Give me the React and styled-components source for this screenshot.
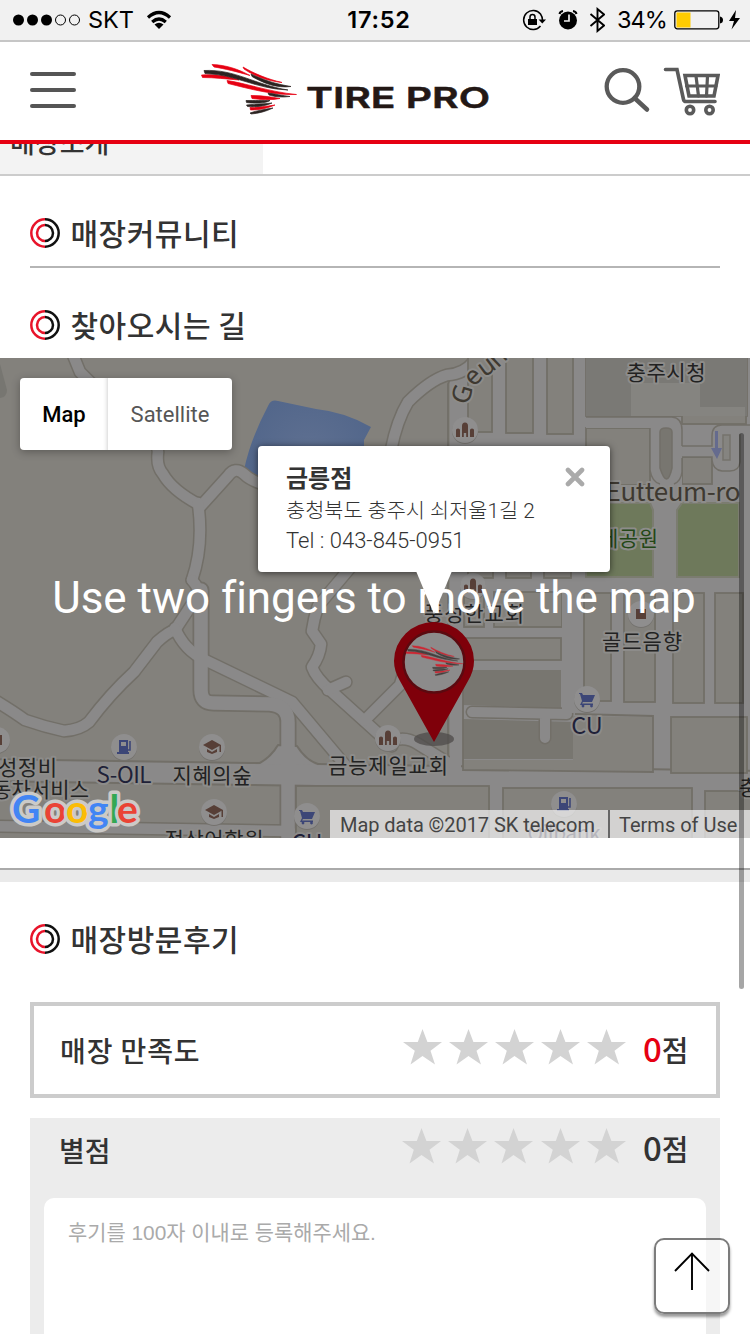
import React from "react";
import styled, { createGlobalStyle } from "styled-components";

const KR = `"Noto Sans CJK KR", sans-serif`;

const GlobalStyle = createGlobalStyle`
  html, body { margin: 0; background: #fff; }
  body { width: 750px; height: 1334px; overflow: hidden; }
  * { box-sizing: border-box; }
`;

const Screen = styled.div`
  position: relative;
  width: 750px;
  height: 1334px;
  overflow: hidden;
  display: flex;
  flex-direction: column;
  background: #fff;
  color: #333;
  font-family: ${KR};
`;

/* ---------- status bar ---------- */
const StatusBar = styled.div`
  display: grid;
  grid-template-columns: 1fr auto 1fr;
  align-items: center;
  height: 42px;
  flex: none;
  padding: 0 10px 1px 13px;
  background: #f1f1f1;
  border-bottom: 2px solid #c6c6c6;
  color: #000;
  font: 400 24px/40px Inter, sans-serif;
`;
const Cluster = styled.div`
  display: flex;
  align-items: center;
  justify-content: ${(p) => (p.$end ? "flex-end" : "flex-start")};
`;
const Carrier = styled.span`
  margin: 0 12px 0 8px;
  font-size: 23.5px;
`;
const Clock = styled.span`
  font-weight: 600;
  font-size: 23.5px;
  letter-spacing: 0.8px;
  padding-left: 5px;
`;
const Percent = styled.span`
  font-size: 23.5px;
  letter-spacing: -0.9px;
  margin: 0 7px 0 12px;
`;

/* ---------- header ---------- */
const Header = styled.header`
  display: flex;
  align-items: center;
  height: 102px;
  flex: none;
  padding: 0 30px 2px 30px;
  border-bottom: 4px solid #e60012;
  background: #fff;
`;
const Menu = styled.div`
  display: flex;
  flex-direction: column;
  gap: 11.5px;
  width: 46px;
`;
const MenuLine = styled.span`
  height: 4.4px;
  border-radius: 2px;
  background: #555;
`;
const Logo = styled.svg`
  margin: 0 0 8px 119px;
  display: block;
`;
const HeaderTools = styled.div`
  display: flex;
  margin: 2px 0 0 auto;
`;

/* ---------- tabs ---------- */
const TabStrip = styled.div`
  height: 32px;
  flex: none;
  display: flex;
  border-bottom: 2px solid #ccc;
`;
const Tab = styled.div`
  width: 263px;
  overflow: hidden;
  padding-left: 10px;
  background: #f3f3f3;
  font-weight: 500;
  font-size: 27px;
  line-height: 30px;
`;
const TabText = styled.span`
  display: block;
  margin-top: -17px;
`;

/* ---------- section titles ---------- */
const SectionTitle = styled.h2`
  display: flex;
  align-items: center;
  gap: 10.5px;
  margin: ${(p) => p.$margin};
  height: 30px;
  flex: none;
  font-weight: 500;
  font-size: 30px;
  line-height: 28px;
  letter-spacing: 0.5px;
  color: #333;
`;
const TitleText = styled.span`
  margin-top: -2px;
`;
const Rule = styled.div`
  height: 2px;
  flex: none;
  margin: 18px 30px 0;
  background: #b5b5b5;
`;

/* ---------- map ---------- */
const MapBox = styled.section`
  position: relative;
  height: 480px;
  flex: none;
  overflow: hidden;
  background: #83817c;
  font-family: Roboto, ${KR};
`;
const MapCanvas = styled.svg`
  display: block;
`;
const MapTypes = styled.div`
  position: absolute;
  left: 20px;
  top: 20px;
  display: flex;
  height: 72px;
  border-radius: 4px;
  background: #fff;
  box-shadow: 0 2px 8px rgba(0, 0, 0, 0.3);
`;
const MapType = styled.div`
  width: ${(p) => (p.$on ? 88 : 124)}px;
  text-align: center;
  font-size: 22px;
  line-height: 73px;
  font-weight: ${(p) => (p.$on ? 500 : 400)};
  color: ${(p) => (p.$on ? "#000" : "#565656")};
  box-shadow: ${(p) => (p.$on ? "inset -5px 0 5px -5px rgba(0,0,0,.25)" : "none")};
`;
const InfoWindow = styled.div`
  position: absolute;
  left: 258px;
  top: 88px;
  width: 352px;
  height: 126px;
  padding: 15px 28px;
  border-radius: 4px;
  background: #fff;
  box-shadow: 0 1px 7px rgba(0, 0, 0, 0.6);
  color: #333;
  font-size: 22px;
  line-height: 30px;
  font-weight: 300;
`;
const ShopName = styled.div`
  font-family: ${KR};
  font-weight: 700;
  font-size: 24px;
  line-height: 32px;
  margin-bottom: 3px;
`;
const Address = styled.div`
  font-size: 20.8px;
  white-space: nowrap;
`;
const Close = styled.svg`
  position: absolute;
  right: 25px;
  top: 21px;
`;
const Tail = styled.svg`
  position: absolute;
  left: 154px;
  top: 125px;
`;
const Gesture = styled.div`
  position: absolute;
  left: 0;
  right: 2px;
  top: 214px;
  text-align: center;
  color: #fff;
  font-size: 44px;
  line-height: 52px;
  letter-spacing: -0.03px;
  white-space: nowrap;
`;
const Attribution = styled.div`
  position: absolute;
  right: 0;
  bottom: 0;
  display: flex;
  height: 28px;
  font-size: 20px;
  line-height: 31px;
  color: #444;
`;
const Credit = styled.span`
  width: ${(p) => (p.$last ? 142 : 278)}px;
  padding-left: ${(p) => (p.$last ? 9 : 10)}px;
  background: rgba(245, 245, 245, 0.7);
  border-left: ${(p) => (p.$last ? "2px solid #666" : "none")};
  white-space: nowrap;
  letter-spacing: ${(p) => (p.$last ? 0 : -0.05)}px;
`;

/* ---------- reviews ---------- */
const Divider = styled.div`
  height: 14px;
  flex: none;
  margin-top: 30px;
  border-top: 2px solid #aaa;
  background: #eaeaea;
`;
const ScoreCard = styled.div`
  display: flex;
  align-items: center;
  height: 96px;
  flex: none;
  margin: 48px 30px 0;
  padding: 0 27px 3px 26px;
  border: 4px solid #ccc;
`;
const Label = styled.span`
  font-weight: 500;
  font-size: 28px;
  line-height: 40px;
  letter-spacing: ${(p) => p.$track || 0}px;
  padding-top: ${(p) => p.$drop || 0}px;
`;
const Stars = styled.div`
  display: flex;
  gap: ${(p) => p.$gap}px;
  margin: 0 0 ${(p) => p.$lift}px auto;
`;
const Score = styled.span`
  width: 46px;
  margin-left: 17px;
  font-weight: 500;
  font-size: 29px;
  line-height: 40px;
  white-space: nowrap;
`;
const Digit = styled.span`
  font-size: 33px;
  color: ${(p) => (p.$red ? "#e60012" : "#333")};
`;
const ReviewForm = styled.div`
  display: flex;
  flex-direction: column;
  flex: 1;
  margin: 20px 30px 0;
  padding: 0 14px;
  background: #ececec;
`;
const FormTop = styled.div`
  display: flex;
  align-items: center;
  height: 80px;
  flex: none;
  padding: 0 17px 22px 15px;
`;
const TextArea = styled.div`
  flex: 1;
  padding: 21px 24px;
  border-radius: 10px 10px 0 0;
  background: #fff;
  color: #aaa;
  font: 400 20.9px/28px "Liberation Sans", ${KR};
`;

/* ---------- floating ---------- */
const TopButton = styled.button`
  position: absolute;
  left: 654px;
  top: 1238px;
  width: 76px;
  height: 76px;
  padding: 0;
  display: flex;
  justify-content: center;
  border: 2px solid #7c7c7c;
  border-radius: 10px;
  background: rgba(255, 255, 255, 0.5);
  box-shadow: 0 3px 3px rgba(0, 0, 0, 0.4);
`;
const ScrollThumb = styled.div`
  position: absolute;
  left: 739px;
  top: 433px;
  width: 5px;
  height: 556px;
  border-radius: 3px;
  background: rgba(0, 0, 0, 0.35);
`;

/* each feather is a tapered sliver */
const Wing = () => (
  <g strokeWidth=".7" strokeLinejoin="round">
    <g fill="#e60012" stroke="#e60012">
      <path d="M12 9.500C26 10 38 14 50 20.500C38 17 24 13.500 14 12Z" />
      <path d="M43 12C54 18.500 67 24 82 27.500C67 26 54 21 44 14Z" />
      <path d="M1.500 20C14 19 28 20.500 39 25C27 24 14 22.500 2.500 22.500Z" />
      <path d="M27 25.500C45 28 70 37 96.500 39.500C74 40.500 50 34 28 28.500Z" />
      <path d="M51 40.500C62 40.500 71 42 80 43.500C71 45.500 60 44.500 52 43.500Z" />
      <path d="M50 52.500C59 52 66 51.500 75 50C67 53.500 59 55 50.500 55Z" />
    </g>
    <g fill="#2b2321" stroke="#2b2321">
      <path d="M4 15.500C35 14 54 29.500 88 35C56 34 36 19.500 5 18.500Z" />
      <path d="M51 19C64 25.500 78 29.500 91 31.500C77 33.500 63 28 52 21.500Z" />
      <path d="M68 38C75 39 82 40.500 90 41.500C82 42.500 75 42 69 40Z" />
      <path d="M46 45.500C54 45.500 64 45.500 70 45.500C66 48.500 53 48.500 46.500 47.500Z" />
      <path d="M46.500 50C56 49 64 49 72 48C64 51.500 56 52 47.500 51.500Z" />
      <path d="M50 58C57 55.500 64 54.500 73 53C66 56.500 58 58.500 51 59Z" />
    </g>
  </g>
);

const Ring = () => (
  <svg width="30" height="30" viewBox="0 0 30 30" fill="none" strokeWidth="2.500">
    <path d="M15 1.300A13.700 13.700 0 0 0 15 28.700" stroke="#e8142a" />
    <path d="M15 1.300A13.700 13.700 0 0 1 15 28.700" stroke="#111" />
    <path d="M15 7A8 8 0 0 0 15 23" stroke="#e8142a" />
    <path d="M15 7A8 8 0 0 1 15 23" stroke="#111" />
  </svg>
);

const Star = () => (
  <svg width="39" height="36" viewBox="0 0 39 36">
    <path d="M19.500 0L24.400 13H39L27.500 21.700L32 35.500L19.500 27L7.500 35.500L11.800 21.700L0 13H14.800Z" fill="#d3d3d3" />
  </svg>
);

const StarRow = ({ gap, lift }) => (
  <Stars $gap={gap} $lift={lift}>
    {[0, 1, 2, 3, 4].map((n) => <Star key={n} />)}
  </Stars>
);

const block = { fill: "#83817c", stroke: "#726f68", strokeWidth: 1.8 };

/* [x, y, width, height] of every city block east of the main avenue */
const BLOCKS = [
  [468, 340, 24, 92], [506, 340, 27, 93], [547, 340, 26, 94],
  [586, 340, 161, 76], [586, 428, 64, 57],
  [682, 340, 64, 84], [682, 457, 30, 27],
  [468, 560, 25, 18], [506, 560, 25, 18], [544, 560, 27, 18],
  [464, 592, 20, 35], [494, 592, 68, 35],
  [463, 638, 98, 22],
  [584, 593, 27, 108], [624, 593, 31, 109], [673, 593, 31, 110], [715, 593, 28, 110],
  [671, 717, 76, 56],
  [296, 786, 193, 70], [503, 788, 189, 70], [705, 791, 60, 70],
];

const ROADS = [
  "M71 350L80 372L110 402Q158 430 158 452Q156 466 163 474Q172 490 198 504",
  "M199 508L228 476Q235 466 244 474Q252 482 270 486",
  "M198 503Q204 545 192 580",
  "M192 580Q200 588 201 606",
  "M-4 701Q14 712 25 720Q45 727 64 731Q80 730 89 722Q110 694 134 672L157 642Q168 632 175 630L200 592",
  "M175 628Q184 650 205 660L292 702L345 765",
  "M350 568L318 606Q314 618 312 631L321 644Q320 656 312 667Q316 678 330 690L392 746",
  "M328 690L346 682",
  "M365 720L400 685L405 668L430 640",
  "M388 744Q402 734 418 744L450 764",
  "M391 450Q397 420 408 402Q430 380 447 375Q465 374 475 360L495 350",
  "M-10 826L290 831",
];

const HALO = { stroke: "#8d8c8a", strokeWidth: 4, paintOrder: "stroke", strokeLinejoin: "round" };

const Place = ({ x, y, children, fill = "#222", size = 21, anchor = "middle", w }) => (
  <text x={x} y={y} fontSize={size} fill={fill} textAnchor={anchor} textLength={w} {...HALO}
    fontFamily={`"Noto Sans CJK KR", sans-serif`}>{children}</text>
);

const Dot = ({ x, y, children }) => (
  <g transform={`translate(${x} ${y})`}>
    <circle r="13" cy="1" fill="#74726e" />
    <circle r="13" fill="#8f8e8e" />
    {children}
  </g>
);
const Fuel = () => (
  <g fill="#3c4677">
    <path d="M-5 -7H4V5H5V7H-7V5H-5Z" /><path d="M-3 -5H2V-1H-3Z" fill="#8f8e8e" />
    <path d="M6 -6V3H3" stroke="#3c4677" strokeWidth="1.600" fill="none" />
  </g>
);
const Cap = () => (
  <g fill="#573f37">
    <path d="M0 -7L9 -2L0 3L-9 -2Z" /><path d="M-5 2L0 5L5 2V5L0 7L-5 5Z" />
    <path d="M7.500 -2H9V5H7.500Z" />
  </g>
);
const Trolley = () => (
  <g fill="#3c4677">
    <path d="M-8 -6H-5L-4 -4H8L5 3H-4L-5 4.500H6V6H-7L-5 2L-7 -5H-8Z" />
    <circle cx="-4" cy="7" r="1.400" /><circle cx="4.500" cy="7" r="1.400" />
  </g>
);
const Church = () => (
  <g fill="#573f37">
    <path d="M-9 7V0Q-9 -1.500 -7 -1.500T-5 0V7Z" /><path d="M5 7V0Q5 -1.500 7 -1.500T9 0V7Z" />
    <path d="M-3 7V-4Q-3 -7.500 0 -7.500T3 -4V7H1.200V3H-1.200V7Z" />
  </g>
);

const CityMap = () => (
  <MapCanvas width="750" height="480" viewBox="0 358 750 480">
    <defs>
      <radialGradient id="lake" gradientUnits="userSpaceOnUse" cx="310" cy="455" r="62">
        <stop offset="0" stopColor="#5f7091" /><stop offset="1" stopColor="#53678b" />
      </radialGradient>
      <path id="geum" d="M469 406Q470 388 484 378Q500 368 518 348" />
    </defs>
    <rect y="358" width="750" height="480" fill="#83817c" />
    <path d="M0 364L7 390Q7 397 0 398Z" fill="#777671" />
    <path d="M244 470Q250 440 268 406Q271 399 278 401L316 409Q345 412 371 427L364 440V486H262Z" fill="url(#lake)" />

    <path d="M450 380V776H750V350H500Z" fill="#8a8989" />
    <path d="M448 446V384Q450 378 455 376M448 446V772" stroke="#726f68" strokeWidth="1.800" fill="none" />
    <g fill="none" strokeLinejoin="round" strokeLinecap="round">
      {ROADS.map((d) => <path key={d} d={d} stroke="#726f68" strokeWidth="13.500" />)}
      <path d="M-10 770L250 774L380 776L760 782" stroke="#726f68" strokeWidth="24" />
      <path d="M201 590V690Q201 703 213 703L270 704Q288 706 288 722V850" stroke="#726f68" strokeWidth="17" />
      <path d="M278 745Q270 759 254 766H326Q308 764 297 746Z" fill="#8a8989" stroke="#726f68" strokeWidth="2" />
      {ROADS.map((d) => <path key={d} d={d} stroke="#8a8989" strokeWidth="10.500" />)}
      <path d="M-10 770L250 774L380 776L760 782" stroke="#8a8989" strokeWidth="20" />
      <path d="M201 590V690Q201 703 213 703L270 704Q288 706 288 722V850" stroke="#8a8989" strokeWidth="13.500" />
    </g>
    <path d="M450 446V775H461V446Z" fill="#8a8989" />
    <path d="M490 786H503V840H490ZM692 786H705V840H692Z" fill="#8a8989" />
    {BLOCKS.map(([x, y, w, h]) => <rect key={`${x}-${y}`} x={x} y={y} width={w} height={h} {...block} />)}

    <path d="M586 350H747V416H586Z" fill="#7a7975" />
    <path d="M631 383H700V407H745V416H631Z" fill="#858480" />
    <path d="M586 417H672Q682 418 682 430V485H672L667 478L657 484L650 470V428H586Z" fill="#8a8989" />
    <path d="M586 417H672Q682 418 682 430V446M650 428V470Q652 482 660 484M682 458V472Q681 481 674 484" fill="none" stroke="#726f68" strokeWidth="1.500" />
    <path d="M660 432Q660 428 666 428T672 432V468Q667 490 660 468Z" fill="#787670" stroke="#726f68" strokeWidth="1.500" />
    <path d="M682 447H712V436Q712 425 722 425H750V433H740V462Q739 471 730 471H722Q713 470 712 460V457H682Z" fill="#8a8989" />
    <path d="M682 446H712V436Q712 425 722 425H750M740 434V462Q739 471 730 471H722Q713 470 712 460V457H682" fill="none" stroke="#726f68" strokeWidth="1.500" />
    <rect x="723" y="435" width="7" height="25" fill="#858480" stroke="#76736c" strokeWidth="1.500" />
    <path d="M715 431H718V448H722L717 459L711 448H715Z" fill="#656b8e" />
    <rect x="585" y="485" width="165" height="18" fill="#8a8989" />
    <path d="M586 503H650L653 510V577H586ZM677 510L682 503H739V577H677Z" fill="#6e795b" stroke="#7b7c70" strokeWidth="2" />

    <path d="M463 670H561V708L463 705ZM463 719L573 722V759H463Z" fill="#787670" />
    <path d="M573 716L653 717V771L463 770V760H573Z" fill="#83817c" />
    <path d="M463 668V770L653 772V716L575 714" fill="none" stroke="#726f68" strokeWidth="1.800" />
    <path d="M472 712L567 714M545 715V738" fill="none" stroke="#726f68" strokeWidth="13" strokeLinecap="round" />
    <path d="M472 712L567 714M545 715V738" fill="none" stroke="#8a8989" strokeWidth="10" strokeLinecap="round" />
    <rect x="562" y="592" width="20" height="121" fill="#8a8989" />

    <Place x="666" y="380" w={79}>충주시청</Place>
    <Place x="673" y="501" size={26} fill="#3e3931" w={135}>Eutteum-ro</Place>
    <Place x="658" y="546" anchor="end" fill="#234716" w={59}>제공원</Place>
    <text fontSize="26" fill="#3e3931" {...HALO} fontFamily={`"Noto Sans", sans-serif`}>
      <textPath href="#geum">Geumj</textPath>
    </text>

    <Dot x="465" y="430"><Church /></Dot>
    <Dot x="473" y="586"><Church /></Dot>
    <Dot x="388" y="738"><Church /></Dot>
    <Dot x="641" y="614"><path d="M-5 -5H5V5H-5Z" fill="#573f37" /></Dot>
    <Dot x="587" y="699"><Trolley /></Dot>
    <Dot x="124" y="747"><Fuel /></Dot>
    <Dot x="212" y="747"><Cap /></Dot>
    <Dot x="214" y="812"><Cap /></Dot>
    <Dot x="307" y="816"><Trolley /></Dot>
    <Dot x="564" y="804"><Fuel /></Dot>
    <Dot x="-3" y="740"><path d="M0 -5H5V5H0Z" fill="#573f37" /></Dot>

    <Place x="474" y="621" w={100}>풍성한교회</Place>
    <Place x="642" y="649" w={80}>골드음향</Place>
    <Place x="587" y="734" size={23.500} fill="#1f2138">CU</Place>
    <Place x="388" y="773" w={120}>금능제일교회</Place>
    <Place x="57" y="775" anchor="end" w={59}>성정비</Place>
    <Place x="89" y="797" anchor="end" w={97}>동차서비스</Place>
    <Place x="124" y="783" size={22.500} fill="#1f2138" w={55}>S-OIL</Place>
    <Place x="212" y="783" w={79}>지혜의숲</Place>
    <Place x="214" y="847" w={99}>정상어학원</Place>
    <Place x="307" y="851" size={23} fill="#1f2138">CU</Place>
    <Place x="564" y="841" fill="#1f2138" w={73}>Oilbank</Place>
    <Place x="739" y="795" anchor="start">충</Place>

    <ellipse cx="434" cy="739" rx="20" ry="7" fill="#4d4b49" opacity=".75" />
    <path d="M434 742L400 681Q394 671 394 661A40 39 0 0 1 474 661Q474 671 468 681Z" fill="#7f000a" />
    <circle cx="434" cy="662" r="30.500" fill="#8c8b8b" stroke="#5b0a10" strokeWidth="2.500" />
    <g transform="translate(405 640) scale(.6)" opacity=".72"><Wing /></g>

    <text x="12 44 66 88 109.500 117" y="823" fontFamily="Lato, sans-serif" fontSize="39" fontWeight="700"
      stroke="#cbcac8" strokeWidth="7" strokeLinejoin="round" paintOrder="stroke">
      <tspan fill="#4285f4">G</tspan><tspan fill="#ea4335">o</tspan><tspan fill="#fbbc05">o</tspan><tspan fill="#4285f4">g</tspan><tspan fill="#34a853">l</tspan><tspan fill="#ea4335">e</tspan>
    </text>
  </MapCanvas>
);

export default function App() {
  return (
    <Screen>
      <GlobalStyle />
      <StatusBar>
        <Cluster>
          <svg width="67" height="12" viewBox="0 0 67 12">
            <circle cx="5.500" cy="6" r="5.500" /><circle cx="19.500" cy="6" r="5.500" /><circle cx="33.500" cy="6" r="5.500" />
            <g fill="none" stroke="#000"><circle cx="47.500" cy="6" r="5" /><circle cx="61.500" cy="6" r="5" /></g>
          </svg>
          <Carrier>SKT</Carrier>
          <svg width="26" height="20" viewBox="0 0 26 20">
            <g fill="none" stroke="#000" strokeWidth="3.200">
              <path d="M2 7.500Q13 -2.500 24 7.500" /><path d="M6.200 12Q13 6 19.800 12" />
            </g>
            <path d="M8.500 14.500Q13 11 17.500 14.500L13 19Z" />
          </svg>
        </Cluster>
        <Clock>17:52</Clock>
        <Cluster $end>
          <svg width="85" height="28" viewBox="0 0 85 28">
            <path d="M20.500 8A9.500 9.500 0 1 0 20.500 20M20.500 8Q22.500 11 22.500 14" fill="none" stroke="#000" strokeWidth="1.500" />
            <path d="M18.500 13.500H26L22.300 17.500Z" />
            <path d="M8 13H17V19H8Z" /><path d="M10 13V11Q10 8.500 12.500 8.500T15 11V13" fill="none" stroke="#000" strokeWidth="1.500" />
            <circle cx="48" cy="14.500" r="9" />
            <path d="M49 8.500V15H44" fill="none" stroke="#f1f1f1" strokeWidth="1.700" />
            <path d="M39.500 8Q40 5.500 43 5M56.500 8Q56 5.500 53 5" fill="none" stroke="#000" strokeWidth="2" />
            <path d="M70.500 8L84 19.500L77.500 25V3L84 8.500L70.500 20" fill="none" stroke="#000" strokeWidth="1.900" />
          </svg>
          <Percent>34%</Percent>
          <svg width="66" height="22" viewBox="0 0 66 22">
            <rect x="0.800" y="1.800" width="44" height="18" rx="2.500" fill="none" stroke="#000" strokeWidth="1.300" />
            <rect x="2.500" y="3.500" width="14" height="15" fill="#fc0" />
            <path d="M46 7.500Q49 8 49 11T46 14.500Z" />
            <path d="M62 1L55 12H60L57.500 20.500L66 9H61Z" />
          </svg>
        </Cluster>
      </StatusBar>

      <Header>
        <Menu><MenuLine /><MenuLine /><MenuLine /></Menu>
        <Logo width="297" height="65" viewBox="0 0 297 65">
          <g transform="translate(5 1)"><Wing /></g>
          <text x="111" y="53.500" fontFamily="Inter, sans-serif" fontWeight="600" fontSize="29" textLength="184" lengthAdjust="spacingAndGlyphs" fill="#231815" stroke="#231815" strokeWidth=".5">TIRE PRO</text>
        </Logo>
        <HeaderTools>
          <svg width="118" height="50" viewBox="0 0 118 50" fill="none" stroke="#5a5a5a" strokeLinecap="round">
            <circle cx="21" cy="20.500" r="16.300" strokeWidth="4.300" />
            <path d="M32.500 32L45 43.500" strokeWidth="4.500" />
            <path d="M63.500 3.500H75L81.500 33.500Q82 35.500 84 35.500H113" strokeWidth="3.600" />
            <path d="M83 9.500H116L112 30H87Z" strokeWidth="3.600" />
            <path d="M84.500 20H114M94 10L96.500 30M105.500 10L104.500 30" strokeWidth="3.200" />
            <circle cx="88" cy="44" r="3.700" strokeWidth="3.600" /><circle cx="107.500" cy="44" r="3.700" strokeWidth="3.600" />
          </svg>
        </HeaderTools>
      </Header>

      <TabStrip><Tab><TabText>매장소개</TabText></Tab></TabStrip>

      <SectionTitle $margin="42px 30px 0"><Ring /><TitleText>매장커뮤니티</TitleText></SectionTitle>
      <Rule />
      <SectionTitle $margin="42px 30px 18px"><Ring /><TitleText>찾아오시는 길</TitleText></SectionTitle>

      <MapBox>
        <CityMap />
        <MapTypes><MapType $on>Map</MapType><MapType>Satellite</MapType></MapTypes>
        <InfoWindow>
          <ShopName>금릉점</ShopName>
          <Address>충청북도 충주시 쇠저울1길 2</Address>
          <div>Tel : 043-845-0951</div>
          <Close width="20" height="20" viewBox="0 0 20 20"><path d="M3 3L17 17M17 3L3 17" stroke="#aaa" strokeWidth="4.600" strokeLinecap="round" /></Close>
          <Tail width="44" height="46" viewBox="0 0 44 46"><path d="M4 0H40L22 43Z" fill="#fff" /></Tail>
        </InfoWindow>
        <Gesture>Use two fingers to move the map</Gesture>
        <Attribution><Credit>Map data ©2017 SK telecom</Credit><Credit $last>Terms of Use</Credit></Attribution>
      </MapBox>

      <Divider />
      <SectionTitle $margin="42px 30px 0"><Ring /><TitleText>매장방문후기</TitleText></SectionTitle>

      <ScoreCard>
        <Label $drop={3} $track={0.9}>매장 만족도</Label>
        <StarRow gap={7} lift={3} />
        <Score><Digit $red>0</Digit>점</Score>
      </ScoreCard>
      <ReviewForm>
        <FormTop>
          <Label $drop={5}>별점</Label>
          <StarRow gap={7.3} lift={3} />
          <Score><Digit>0</Digit>점</Score>
        </FormTop>
        <TextArea>후기를 100자 이내로 등록해주세요.</TextArea>
      </ReviewForm>

      <ScrollThumb />
      <TopButton aria-label="top">
        <svg width="40" height="52" viewBox="0 0 40 52" fill="none" stroke="#000" strokeWidth="1.900"><path d="M20 50V13M3 31L20 13.500L37 31" /></svg>
      </TopButton>
    </Screen>
  );
}
